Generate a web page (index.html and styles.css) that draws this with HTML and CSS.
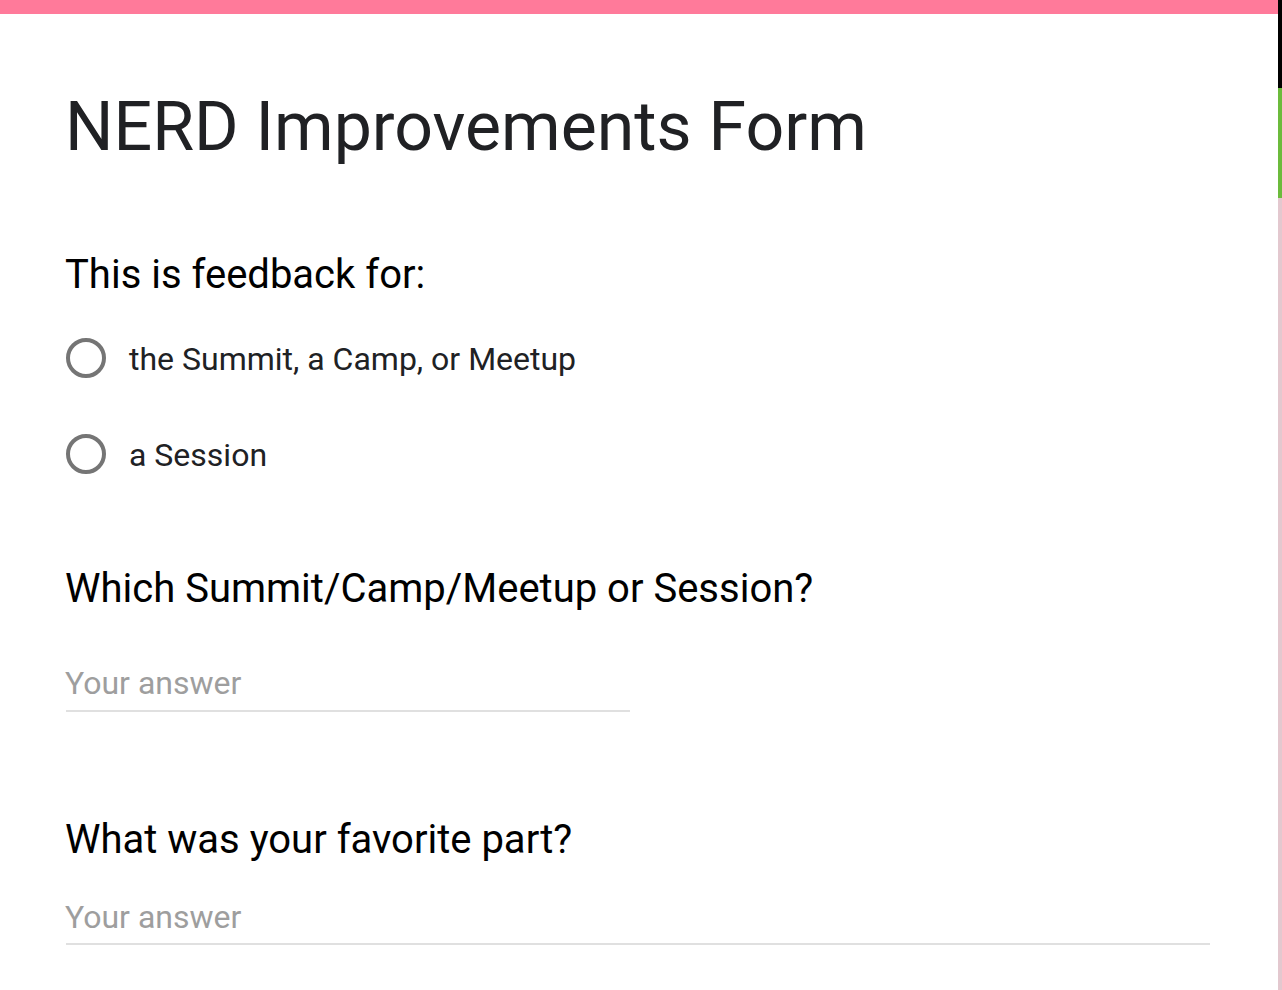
FILE: index.html
```html
<!DOCTYPE html>
<html>
<head>
<meta charset="utf-8">
<link rel="stylesheet" href="styles.css">
</head>
<body>
<div class="topbar"></div>
<div class="edge">
  <div class="edge-black"></div>
  <div class="edge-green"></div>
  <div class="edge-pink"></div>
</div>
<main class="form">
  <h1 class="title">NERD Improvements Form</h1>
  <section class="q q-radio">
    <h2 class="q-title">This is feedback for:</h2>
    <div class="options">
      <label class="option"><span class="radio"></span><span class="opt-text">the Summit, a Camp, or Meetup</span></label>
      <label class="option"><span class="radio"></span><span class="opt-text">a Session</span></label>
    </div>
  </section>
  <section class="q q-short">
    <h2 class="q-title">Which Summit/Camp/Meetup or Session?</h2>
    <div class="input short"><span class="placeholder">Your answer</span></div>
  </section>
  <section class="q q-long">
    <h2 class="q-title">What was your favorite part?</h2>
    <div class="input long"><span class="placeholder">Your answer</span></div>
  </section>
</main>
</body>
</html>
```
FILE: styles.css
```css
html, body {
  margin: 0;
  padding: 0;
  background: #ffffff;
  height: 990px;
  overflow: hidden;
}
body {
  font-family: Roboto, "Liberation Sans", Arial, sans-serif;
  color: #202124;
  position: relative;
}
.topbar {
  height: 14px;
  background: #ff7a9a;
  margin-right: 4px;
}
.edge {
  position: absolute;
  top: 0;
  right: 0;
  width: 4px;
  height: 990px;
  display: flex;
  flex-direction: column;
}
.edge-black { height: 88px; background: #000; }
.edge-green { height: 110px; background: #6cbb3c; }
.edge-pink { flex: 1; background: #e3c8cf; }

.form {
  padding: 73px 72px 0 66px;
}
.title {
  margin: 0 0 0 -1px;
  font-size: 68px;
  font-weight: 400;
  line-height: 80px;
  color: #202124;
}
.q-title {
  margin: 0 0 0 -1px;
  font-size: 40px;
  font-weight: 400;
  line-height: 48px;
  color: #000;
}
.q-radio { margin-top: 84px; }
.options {
  margin-top: 39px;
  display: flex;
  flex-direction: column;
  gap: 56px;
}
.option {
  display: flex;
  align-items: center;
  gap: 23px;
  height: 40px;
}
.radio {
  width: 32px;
  height: 32px;
  border: 4px solid #757575;
  border-radius: 50%;
  flex: none;
}
.opt-text {
  font-size: 32px;
  line-height: 40px;
  padding-top: 2px;
  color: #202124;
}
.q-short { margin-top: 91px; }
.q-long { margin-top: 104px; }
.input {
  border-bottom: 2px solid #e0e0e0;
}
.input.short { width: 564px; margin-top: 50px; }
.input.long { width: 1144px; margin-top: 33px; }
.placeholder {
  display: block;
  margin-left: -1px;
  font-size: 32px;
  line-height: 40px;
  color: #9e9e9e;
}
.short .placeholder { padding-bottom: 7px; }
.long .placeholder { padding-bottom: 6px; }
```
